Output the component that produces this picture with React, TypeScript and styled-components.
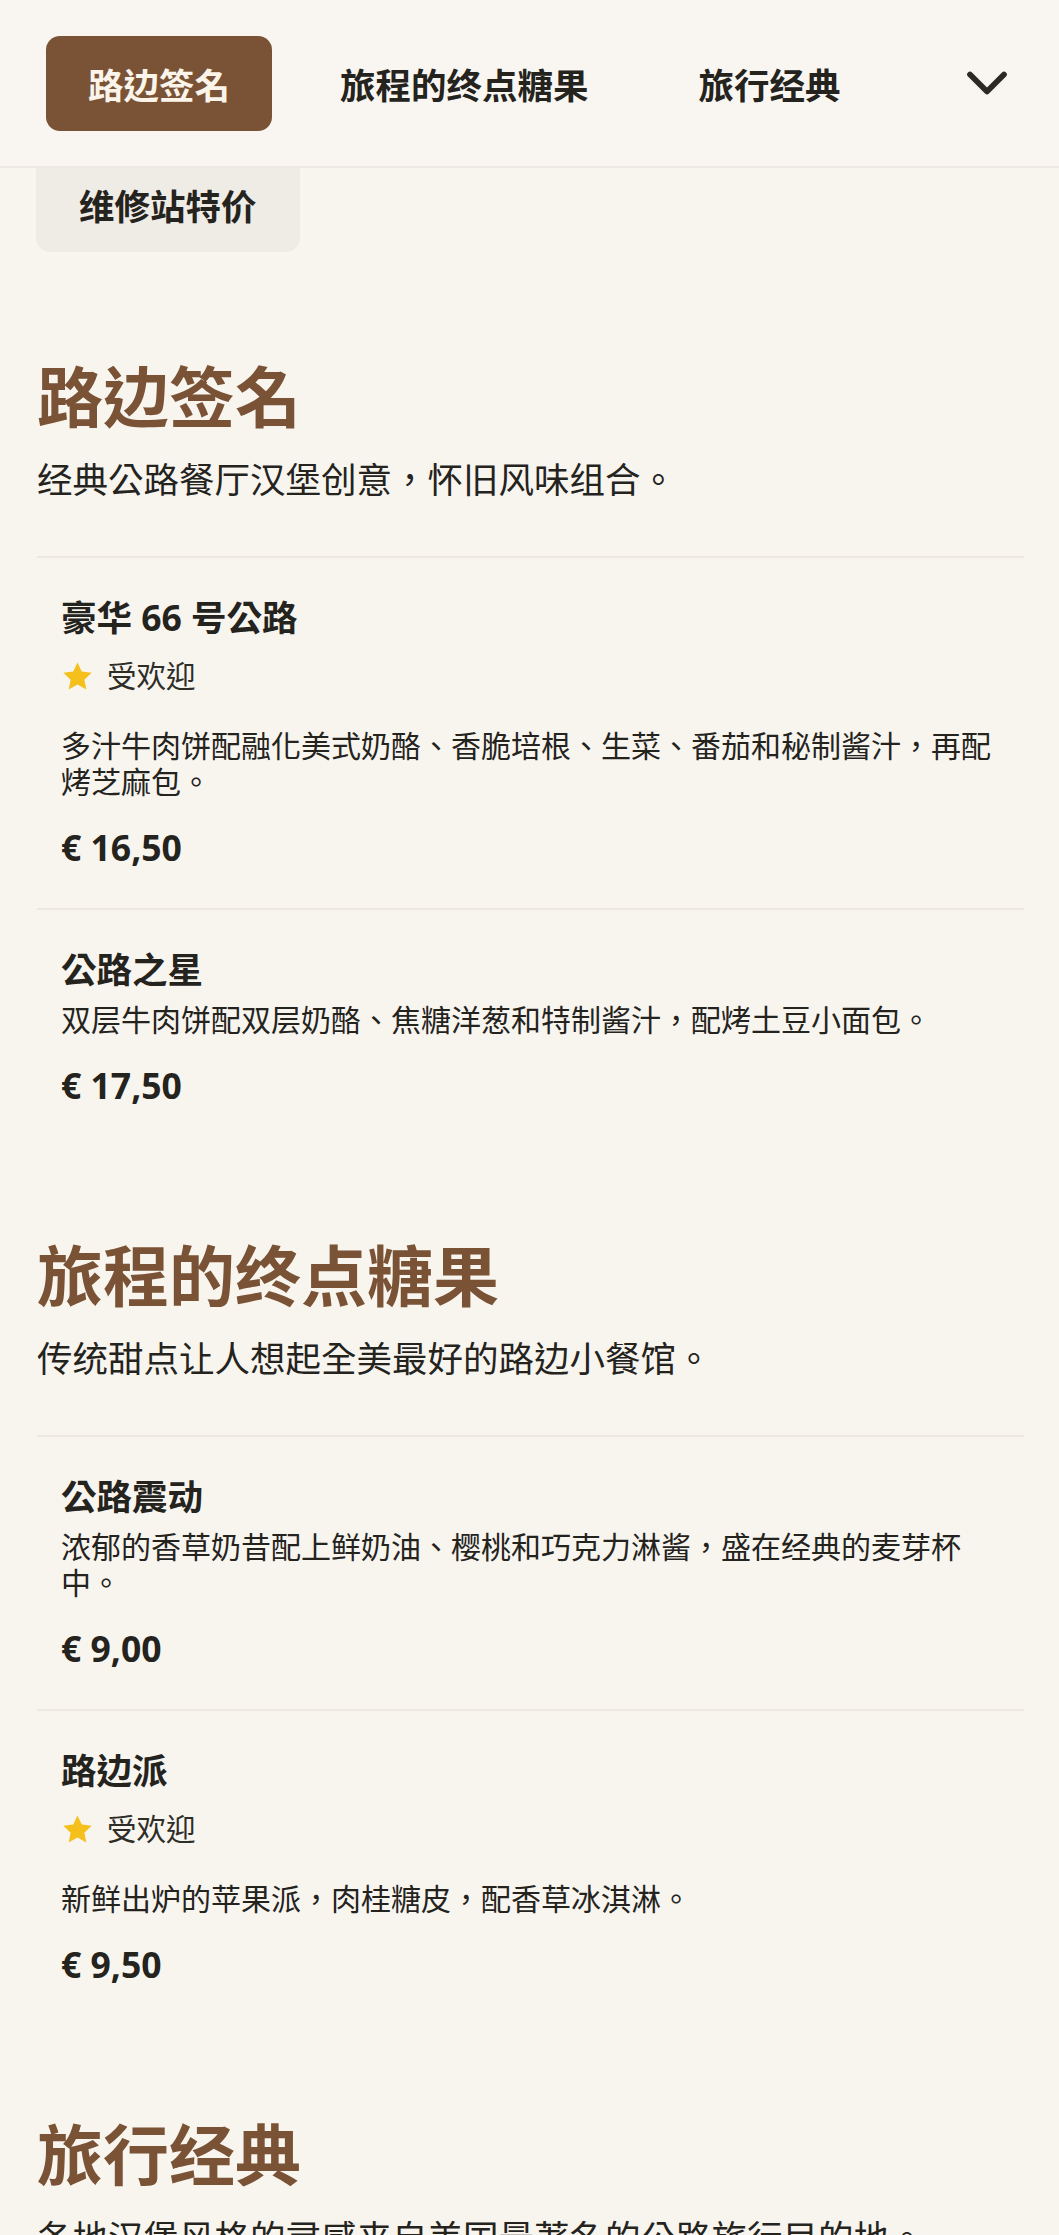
import React from "react";
import styled, { createGlobalStyle } from "styled-components";

const GlobalStyle = createGlobalStyle`
  html, body {
    margin: 0;
    padding: 0;
    background: #f8f5ef;
  }
  body {
    font-family: "Noto Sans", "Noto Sans CJK TC", sans-serif;
    color: #24231d;
  }
  * { box-sizing: border-box; }
`;

const Page = styled.div`
  width: 100%;
  min-height: 100vh;
  background: #f8f5ef;
`;

const Header = styled.header`
  display: flex;
  align-items: center;
  height: 168px;
  padding: 0 38px 0 46px;
  background: #f9f6f1;
  border-bottom: 2px solid #eeeae3;
`;

const Tabs = styled.nav`
  display: flex;
  gap: 26px;
`;

const Tab = styled.button<{ $active?: boolean }>`
  height: 95px;
  padding: 0 42px;
  border: none;
  border-radius: 14px;
  font-family: inherit;
  font-size: 35.5px;
  font-weight: 600;
  white-space: nowrap;
  cursor: pointer;
  background: ${(p) => (p.$active ? "#7a5336" : "transparent")};
  color: ${(p) => (p.$active ? "#fbf4ea" : "#24231d")};
`;

const MoreButton = styled.button`
  margin-left: auto;
  width: 68px;
  height: 68px;
  padding: 0;
  border: none;
  background: none;
  color: #2a2922;
  display: flex;
  align-items: center;
  justify-content: center;
`;

const OverflowRow = styled.div`
  display: flex;
  padding-left: 36px;
`;

const Chip = styled.button`
  height: 84px;
  padding: 0 43px 12px;
  border: none;
  border-radius: 0 0 14px 14px;
  background: #efebe5;
  font-family: inherit;
  font-size: 35.5px;
  font-weight: 600;
  color: #24231d;
`;

const Main = styled.main`
  padding: 106px 35px 120px 37px;
`;

const Section = styled.section`
  & + & {
    margin-top: 91px;
  }
`;

const SectionTitle = styled.h2`
  margin: 0;
  font-size: 66px;
  line-height: 77px;
  font-weight: 700;
  color: #7a5336;
`;

const SectionIntro = styled.p`
  margin: 19px 0 0;
  font-size: 35.5px;
  line-height: 50px;
  color: #24231d;
`;

const ItemList = styled.ul`
  list-style: none;
  margin: 52px 0 0;
  padding: 0;
`;

const Item = styled.li`
  padding: 36px 24px 38px;
  border-top: 2px solid #ede9e2;
`;

const ItemName = styled.h3`
  margin: 0;
  font-size: 35.5px;
  line-height: 46px;
  font-weight: 700;
  color: #24231d;
`;

const Badge = styled.div`
  display: flex;
  align-items: center;
  gap: 13px;
  margin: 18px 0 34px;
  font-size: 29.5px;
  line-height: 36px;
  color: #2e2d28;
`;

const Description = styled.p`
  margin: 10px 0 0;
  font-size: 30px;
  line-height: 36px;
  color: #24231d;
`;

const Price = styled.div`
  margin-top: 24px;
  font-size: 35.5px;
  line-height: 46px;
  font-weight: 700;
  color: #24231d;
`;

const Star = () => (
  <svg width="33" height="33" viewBox="0 0 24 24" aria-hidden="true">
    <path
      d="M12 1.8l3.1 6.6 7.2.9-5.3 5 1.4 7.1L12 17.9l-6.4 3.5 1.4-7.1-5.3-5 7.2-.9z"
      fill="#f5c01b"
    />
  </svg>
);

const ChevronDown = () => (
  <svg
    width="68"
    height="68"
    viewBox="0 0 24 24"
    fill="none"
    stroke="currentColor"
    strokeWidth="2"
    strokeLinecap="round"
    strokeLinejoin="round"
  >
    <path d="m6 9 6 6 6-6" />
  </svg>
);

type MenuItem = {
  name: string;
  description: string;
  price: string;
  popular?: boolean;
};

type MenuSection = {
  title: string;
  intro: string;
  items: MenuItem[];
};

const sections: MenuSection[] = [
  {
    title: "路边签名",
    intro: "经典公路餐厅汉堡创意，怀旧风味组合。",
    items: [
      {
        name: "豪华 66 号公路",
        popular: true,
        description:
          "多汁牛肉饼配融化美式奶酪、香脆培根、生菜、番茄和秘制酱汁，再配烤芝麻包。",
        price: "€ 16,50",
      },
      {
        name: "公路之星",
        description: "双层牛肉饼配双层奶酪、焦糖洋葱和特制酱汁，配烤土豆小面包。",
        price: "€ 17,50",
      },
    ],
  },
  {
    title: "旅程的终点糖果",
    intro: "传统甜点让人想起全美最好的路边小餐馆。",
    items: [
      {
        name: "公路震动",
        description:
          "浓郁的香草奶昔配上鲜奶油、樱桃和巧克力淋酱，盛在经典的麦芽杯中。",
        price: "€ 9,00",
      },
      {
        name: "路边派",
        popular: true,
        description: "新鲜出炉的苹果派，肉桂糖皮，配香草冰淇淋。",
        price: "€ 9,50",
      },
    ],
  },
  {
    title: "旅行经典",
    intro: "各地汉堡风格的灵感来自美国最著名的公路旅行目的地。",
    items: [
      {
        name: "德州烟熏",
        description: "烟熏牛胸肉汉堡配切达奶酪、洋葱圈和烧烤酱。",
        price: "€ 18,00",
      },
    ],
  },
];

const tabs = ["路边签名", "旅程的终点糖果", "旅行经典"];

export default function App() {
  return (
    <Page>
      <GlobalStyle />
      <Header>
        <Tabs>
          {tabs.map((t, i) => (
            <Tab key={t} $active={i === 0}>
              {t}
            </Tab>
          ))}
        </Tabs>
        <MoreButton aria-label="更多">
          <ChevronDown />
        </MoreButton>
      </Header>
      <OverflowRow>
        <Chip>维修站特价</Chip>
      </OverflowRow>
      <Main>
        {sections.map((s) => (
          <Section key={s.title}>
            <SectionTitle>{s.title}</SectionTitle>
            <SectionIntro>{s.intro}</SectionIntro>
            <ItemList>
              {s.items.map((item) => (
                <Item key={item.name}>
                  <ItemName>{item.name}</ItemName>
                  {item.popular && (
                    <Badge>
                      <Star />
                      受欢迎
                    </Badge>
                  )}
                  <Description>{item.description}</Description>
                  <Price>{item.price}</Price>
                </Item>
              ))}
            </ItemList>
          </Section>
        ))}
      </Main>
    </Page>
  );
}
